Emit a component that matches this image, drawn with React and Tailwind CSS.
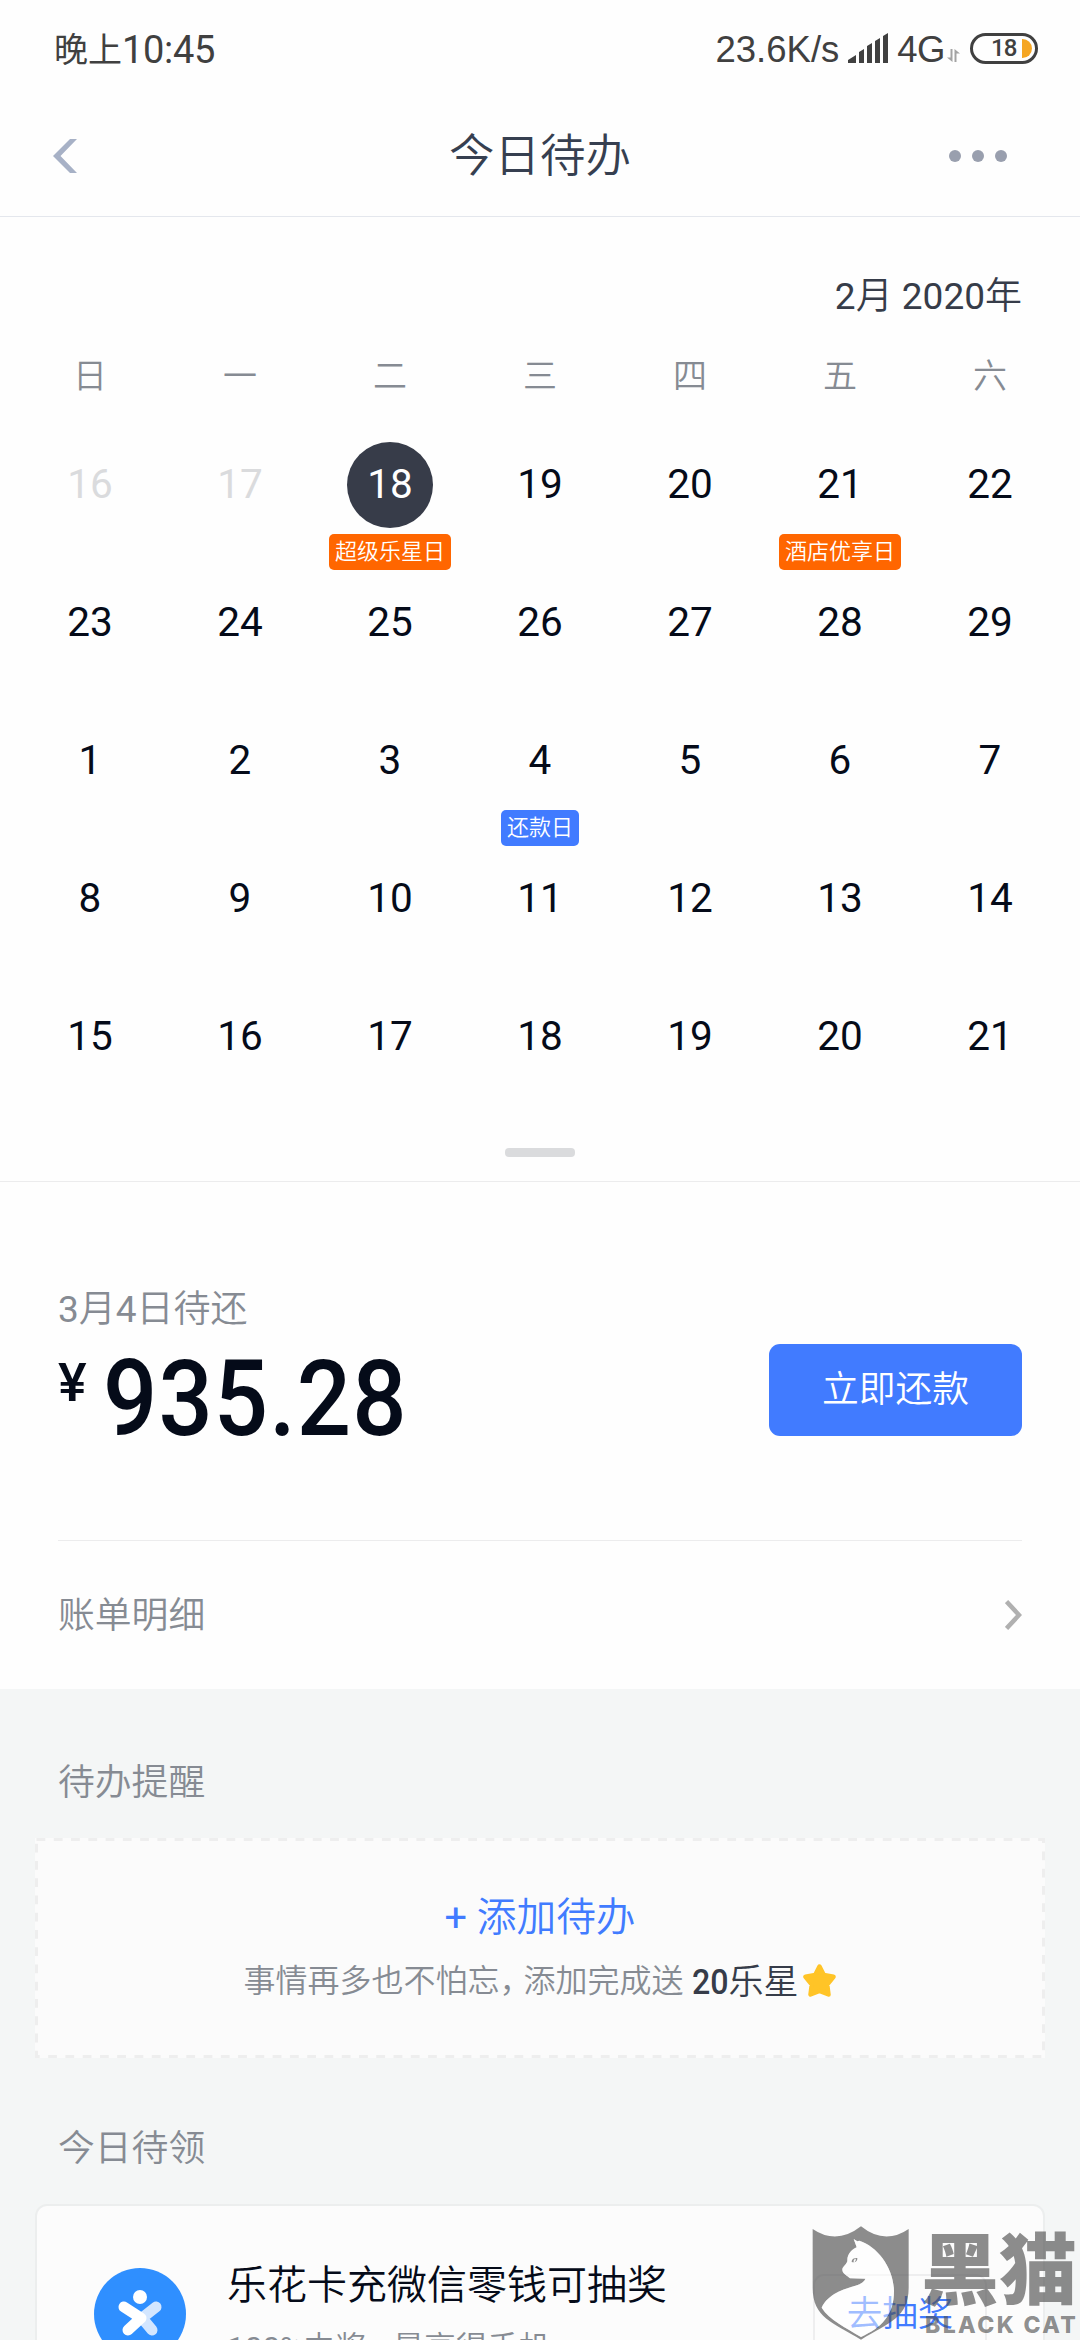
import React from 'react';

const weekdays = ['日', '一', '二', '三', '四', '五', '六'];

const weeks = [
  [16, 17, 18, 19, 20, 21, 22],
  [23, 24, 25, 26, 27, 28, 29],
  [1, 2, 3, 4, 5, 6, 7],
  [8, 9, 10, 11, 12, 13, 14],
  [15, 16, 17, 18, 19, 20, 21],
];

// keyed by "week-day" index
const badges = {
  '0-2': { text: '超级乐星日', color: 'bg-[#ff6600]' },
  '0-5': { text: '酒店优享日', color: 'bg-[#ff6600]' },
  '2-3': { text: '还款日', color: 'bg-[#417bff]' },
};

function StatusBar() {
  return (
    <div className="flex h-[96px] items-center justify-between pl-[54px] pr-[42px] text-[#404040]">
      <div className="flex items-center pt-[4px] leading-none">
        <span className="text-[34px]">晚上</span>
        <span className="text-[38px] tracking-[-0.3px]">10:45</span>
      </div>
      <div className="flex items-center font-['Liberation_Sans'] text-[36.5px] leading-none">
        <span className="mt-1">23.6K/s</span>
        <svg className="ml-[9px]" width="41" height="30" viewBox="0 0 41 30" fill="#404040">
          <path d="M0 30V27L8 22V30ZM11 30V19L16 16V30ZM19 30V13L24 10V30ZM27 30V8L32 5V30ZM35 30V3L40 0V30Z" />
        </svg>
        <span className="ml-[8px] mt-1 tracking-[-0.5px]">4G</span>
        <svg className="ml-[2px] mt-[14px]" width="13" height="13" viewBox="0 0 13 13" fill="#a3a3a3">
          <path d="M3.5 0H5.5V13L0 8.5H3.5ZM7.5 0L13 4.5H9.5V13H7.5Z" />
        </svg>
        <div className="ml-[10px] flex h-[31px] w-[68px] items-center rounded-full border-[3px] border-[#404040] pl-[18px] font-['Roboto']">
          <span className="w-[24px] text-[24px] font-medium tracking-[-1px]">18</span>
          <span className="ml-[7px] h-[19px] w-[10px] rounded-r-full bg-[#f5a623]" />
        </div>
      </div>
    </div>
  );
}

function Header() {
  return (
    <div className="grid h-[121px] grid-cols-3 items-center border-b border-[#e4e7ed] pb-[1px]">
      <svg className="ml-[53px]" width="24" height="34" viewBox="0 0 24 34" fill="#a7b1c6">
        <path d="M17 0H24L7.5 17L24 34H17L0 17Z" />
      </svg>
      <h1 className="pt-[3px] text-center text-[45.5px] font-[350] leading-none text-[#363f50]">今日待办</h1>
      <div className="mr-[73px] flex justify-end gap-[11px]">
        <span className="size-[12px] rounded-full bg-[#999fae]" />
        <span className="size-[12px] rounded-full bg-[#999fae]" />
        <span className="size-[12px] rounded-full bg-[#999fae]" />
      </div>
    </div>
  );
}

function Day({ day, past, today, badge }) {
  let color = 'text-[#050b19]';
  if (past) color = 'text-[#dadbdd]';
  if (today) color = 'bg-[#373c49] text-white';

  return (
    <div className="flex h-[138px] flex-col items-center">
      <div className={`flex size-[86px] items-center justify-center rounded-full pb-[2px] text-[40.5px] leading-none ${color}`}>
        {day}
      </div>
      {badge && (
        <span className={`mt-[6px] flex h-[36px] items-center rounded-[5px] px-[6px] text-[22px] font-[350] leading-none text-white ${badge.color}`}>
          {badge.text}
        </span>
      )}
    </div>
  );
}

function Calendar() {
  return (
    <div className="h-[965px] border-b border-[#ececed] px-[15px] pt-[57px]">
      <div className="flex h-[44px] items-center justify-end pr-[43px] text-[37px] leading-none text-[#363c49]">
        <span>
          2<span className="font-[350]">月</span> 2020<span className="font-[350]">年</span>
        </span>
      </div>
      <div className="mt-[36px] grid h-[44px] grid-cols-7 items-center text-center text-[34px] font-[350] leading-none text-[#868b93]">
        {weekdays.map((d) => (
          <span key={d}>{d}</span>
        ))}
      </div>
      <div className="mt-[44px] grid grid-cols-7">
        {weeks.map((week, w) =>
          week.map((day, d) => (
            <Day
              key={`${w}-${d}`}
              day={day}
              past={w === 0 && d < 2}
              today={w === 0 && d === 2}
              badge={badges[`${w}-${d}`]}
            />
          ))
        )}
      </div>
      <div className="mx-auto mt-[16px] h-[9px] w-[70px] rounded-[4px] bg-[#dadbdd]" />
    </div>
  );
}

function Repayment() {
  return (
    <div className="h-[507px] px-[58px] pt-[106px]">
      <div className="flex h-[253px] items-start justify-between border-b border-[#ececed]">
        <div>
          <p className="pt-[2px] text-[37px] leading-[40px] text-[#868b93]">
            3<span className="font-[350]">月</span>4<span className="font-[350]">日待还</span>
          </p>
          <div className="mt-[17px] flex items-start font-medium leading-none text-[#050b19]">
            <span className="mt-[9px] text-[54px]">¥</span>
            <span className="ml-[16px] origin-left scale-x-[0.91] text-[105px] tracking-[1.2px]">935.28</span>
          </div>
        </div>
        <button className="mt-[56px] h-[92px] w-[253px] rounded-[11px] bg-[#417bff] text-[36.8px] font-[350] leading-none text-white">
          立即还款
        </button>
      </div>
      <div className="flex h-[148px] items-center justify-between text-[36.8px] font-[350] leading-none text-[#868b93]">
        <span className="pt-[3px]">账单明细</span>
        <svg width="17" height="30" viewBox="0 0 17 30" fill="none" stroke="#b0b0b0" strokeWidth="4.5">
          <path d="M1.5 1.5L14 15L1.5 28.5" />
        </svg>
      </div>
    </div>
  );
}

function AddTodo() {
  return (
    <div className="relative mx-[35px] mt-[35px] flex h-[220px] flex-col items-center bg-[#fbfbfb] pt-[59px]">
      <svg className="absolute inset-0" width="1010" height="220" fill="none" stroke="#eeeeee" strokeWidth="3">
        <rect x="1.5" y="1.5" width="1007" height="217" strokeDasharray="8.8 8.47" />
      </svg>
      <div className="text-[39.7px] leading-[42px] text-[#417bff]">
        + <span className="font-[350]">添加待办</span>
      </div>
      <div className="mt-[21px] flex h-[42px] items-center leading-none">
        <span className="text-[32px] font-[350] text-[#868b93]">
          事情再多也不怕忘<span className="tracking-[-8px]">，</span>添加完成送
        </span>
        <span className="ml-[8px] pt-[2px] text-[35px] font-[350] text-[#363c49]">
          <span className="inline-block w-[37px] origin-left scale-x-[0.92] font-medium">20</span>
          乐星
        </span>
        <svg className="ml-[3px]" width="35" height="34" viewBox="0 0 35 34">
          <path
            d="M17.5 2.5L21.8 11L31.5 12.8L25.2 20.5L26.5 30.5L17.5 27L8.5 30.5L9.8 20.5L3.5 12.8L13.2 11Z"
            fill="#ffc427"
            stroke="#ffc427"
            strokeWidth="4.5"
            strokeLinejoin="round"
          />
        </svg>
      </div>
    </div>
  );
}

function RewardCard() {
  return (
    <div className="mx-[35px] mt-[35px] flex h-[220px] rounded-[12px] border-2 border-[#eceeee] bg-[#fcfcfc] pl-[57px] pr-[56px]">
      <svg className="mt-[62px] shrink-0" width="92" height="92" viewBox="0 0 92 92">
        <circle cx="46" cy="46" r="46" fill="#2f8fff" />
        <circle cx="46" cy="29" r="7" fill="#fff" />
        <g strokeWidth="11" strokeLinecap="round" strokeLinejoin="round" fill="none">
          <path d="M62 39L48 50L58 62" stroke="#d3e6ff" />
          <path d="M30 39L47 50L34 62" stroke="#fff" />
        </g>
      </svg>
      <div className="ml-[41px] flex-1 pt-[58px]">
        <p className="text-[40px] font-[350] leading-[44px] text-[#050b19]">乐花卡充微信零钱可抽奖</p>
        <p className="mt-[21px] text-[31.5px] font-[350] leading-[40px] text-[#868b93]">
          <span className="font-normal">100%</span>中奖<span className="tracking-[-5px]">，</span>最高得手机
        </p>
      </div>
      <button className="mt-[68px] h-[81px] w-[174px] rounded-[11px] border-2 border-[#eeeeef] text-[35.5px] font-[350] leading-none text-[#417bff]">
        去抽奖
      </button>
    </div>
  );
}

const shieldPath =
  'M20 39Q92 88 165 31Q236 88 308 39V215C308 305 250 318 165 371C80 318 20 305 20 215Z';
const catPath =
  'M160 74C215 92 263 155 264 225C264 300 225 335 165 363C120 335 70 312 47 275C66 232 120 218 148 209C168 203 175 196 178 188L132 187C125 180 110 174 109 162C108 153 122 145 124 135C123 112 140 100 152 94L143 69L154 76Z';

function Watermark() {
  return (
    <div className="absolute left-[806px] top-[2216px] flex h-[124px] w-[274px] text-[#505050]/65">
      <svg className="shrink-0" width="112" height="125" viewBox="0 0 336 375">
        <path d={shieldPath + catPath} fill="currentColor" fillRule="evenodd" />
        <path d={catPath} fill="#fff" fillOpacity="0.5" />
        <path d="M137 138C137 129 143 125 154 126C155 135 148 141 137 138Z" fill="currentColor" />
        <path d="M142 136L147 127L150 131L146 139Z" fill="#fff" />
      </svg>
      <div className="ml-[3px] pt-[19px]">
        <div className="whitespace-nowrap text-[78px] font-black leading-[76px]">黑猫</div>
        <div className="mt-[2px] whitespace-nowrap pl-[4px] font-['Inter'] text-[23px] font-extrabold leading-[25px] tracking-[2.4px]">
          BLACK CAT
        </div>
      </div>
    </div>
  );
}

export default function App() {
  return (
    <div className="relative h-[2340px] w-[1080px] overflow-hidden bg-[#f4f6f6] font-[Roboto,'Noto_Sans_CJK_SC',sans-serif] font-normal">
      <div className="bg-[#fefefe]">
        <StatusBar />
        <Header />
        <Calendar />
        <Repayment />
      </div>
      <h2 className="px-[58px] pt-[73px] text-[36.8px] font-[350] leading-[41px] text-[#868b93]">待办提醒</h2>
      <AddTodo />
      <h2 className="px-[58px] pt-[70px] text-[36.8px] font-[350] leading-[41px] text-[#868b93]">今日待领</h2>
      <RewardCard />
      <Watermark />
    </div>
  );
}
